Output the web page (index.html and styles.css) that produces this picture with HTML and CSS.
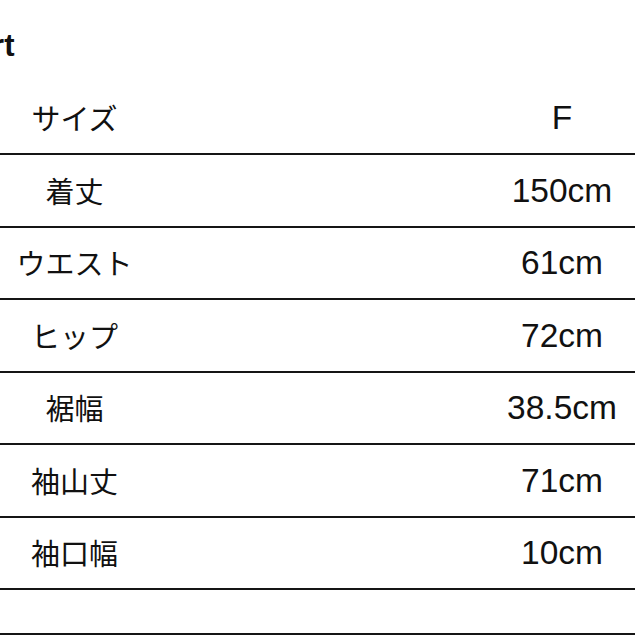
FILE: index.html
```html
<!DOCTYPE html>
<html lang="ja">
<head>
<meta charset="utf-8">
<link rel="stylesheet" href="styles.css">
</head>
<body>
<div class="page">
  <div class="title-bar"><h1 class="title">Size chart</h1></div>
  <div class="table">
    <div class="row"><div class="label">サイズ</div><div class="value">F</div></div>
    <div class="row"><div class="label">着丈</div><div class="value">150cm</div></div>
    <div class="row"><div class="label">ウエスト</div><div class="value">61cm</div></div>
    <div class="row"><div class="label">ヒップ</div><div class="value">72cm</div></div>
    <div class="row"><div class="label">裾幅</div><div class="value">38.5cm</div></div>
    <div class="row"><div class="label">袖山丈</div><div class="value">71cm</div></div>
    <div class="row"><div class="label">袖口幅</div><div class="value">10cm</div></div>
    <div class="row last"><div class="label"></div><div class="value"></div></div>
  </div>
</div>
</body>
</html>
```
FILE: styles.css
```css
html, body {
  margin: 0;
  padding: 0;
  background: #fff;
  overflow: hidden;
  width: 635px;
  height: 635px;
}
.page {
  width: 635px;
  height: 635px;
  overflow: hidden;
  color: #111;
  font-family: "Liberation Sans", "Noto Sans CJK JP", sans-serif;
}
.title-bar {
  height: 82.5px;
  display: flex;
  align-items: center;
  justify-content: flex-end;
  width: 14.5px;
  overflow: visible;
}
.title {
  margin: 0;
  font-size: 31px;
  font-weight: bold;
  white-space: nowrap;
  padding-top: 10px;
}
.table {
  display: flex;
  flex-direction: column;
  width: 975px;
}
.row {
  display: grid;
  grid-template-columns: 149px 826px;
  height: 72.5px;
  box-sizing: border-box;
  border-bottom: 2px solid #151515;
  align-items: center;
}
.row.last {
  height: 44.5px;
}
.label {
  text-align: center;
  font-family: "Noto Sans CJK JP", sans-serif;
  font-size: 29px;
  line-height: 1;
}
.value {
  text-align: center;
  font-size: 33.5px;
  line-height: 1;
}
```
